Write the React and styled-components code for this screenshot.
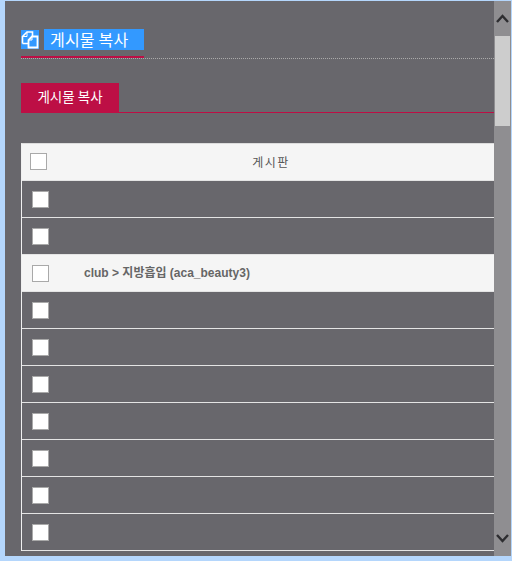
import React from "react";
import styled, { createGlobalStyle } from "styled-components";

const Global = createGlobalStyle`
  html, body { margin: 0; padding: 0; height: 100%; overflow: hidden; }
  body { background: linear-gradient(90deg, #d3e6fb 0, #afd3fb 5px); font-family: "Liberation Sans", "Noto Sans CJK KR", sans-serif; }
`;
const Frame = styled.div`
  box-sizing: border-box; width: 512px; height: 561px; padding: 1px 1px 5px 5px;
  display: flex; background: #b4d6fc;
`;
const Page = styled.main`
  flex: 1; min-width: 0; height: 555px; overflow: hidden; background: #68676c;
  padding: 28px 0 0 16px; box-sizing: border-box;
`;
const TitleBar = styled.div`
  height: 29px; display: flex; align-items: flex-start; border-bottom: 1px dotted #aaa; box-sizing: content-box; position: relative;
`;
const TitleInner = styled.h1`
  margin: 0; width: 123px; height: 29px; display: flex; align-items: flex-start; box-sizing: border-box;
  border-bottom: 2px solid #bd0f45; font-weight: 400; position: relative; z-index: 1; margin-bottom: -1px;
`;
const IconWrap = styled.span`
  display: block; width: 18px; height: 19px; margin-top: 1px; background: #3399ff;
  svg { display: block; margin-top: 0; }
`;
const TitleText = styled.span`
  margin-left: 5px; width: 100px; height: 21px; background: #3399ff; color: #fff;
  font: 400 16px/21px "Noto Sans CJK KR", sans-serif; padding-left: 6px; box-sizing: border-box; white-space: nowrap; letter-spacing: .2px;
`;
const TabBar = styled.div`
  margin-top: 24px; height: 30px; border-bottom: 1px solid #bd0f45; box-sizing: border-box; display: flex;
`;
const Tab = styled.div`
  width: 98px; height: 29px; background: #bd0f45; color: #fff; text-align: center;
  font: 400 13.5px/27px "Noto Sans CJK KR", sans-serif;
`;
const Table = styled.div`
  margin-top: 30px; border-top: 1px solid #dcdcdc; border-left: 1px solid #f0f0f0; width: 473px;
`;
const Row = styled.div`
  height: 37px; box-sizing: border-box; border-bottom: 1px solid #e4e4e4; display: flex; align-items: center;
  background: ${p => (p.$light ? "#f5f5f5" : "transparent")};
`;
const Box = styled.span`
  flex: none; display: block; width: 17px; height: 17px; box-sizing: border-box;
  margin-left: ${p => (p.$head ? "8px" : "10px")};
  margin-top: ${p => (p.$head ? "-1px" : "0")};
  background: #fff; border: 1px solid #a9a9a9;
`;
const HeadLabel = styled.div`
  flex: 1; text-align: center; color: #555; font: 400 12px/16px "Noto Sans CJK KR", sans-serif; letter-spacing: 1.4px; padding-right: 0; margin-left: -26px; padding-left: 26px;
`;
const RowLabel = styled.div`
  margin-left: 35px; color: #666; font: 700 12px/16px "Liberation Sans", "Noto Sans CJK KR", sans-serif; white-space: nowrap;
`;
const Scroll = styled.aside`
  flex: none; width: 17px; height: 555px; background: #8f8e91; display: flex; flex-direction: column; align-items: center; margin-right: 0;
`;
const ScrollBtn = styled.div`
  width: 17px; height: ${p => p.$h}px; flex: none; display: flex; align-items: center; justify-content: center; background: #8f8e91;
`;
const Thumb = styled.div`
  width: 15px; height: 90px; background: #cdcdcd; flex: none;
`;
const Spacer = styled.div` flex: 1; `;

const CopyIcon = () => (
  <svg width="18" height="19" viewBox="0 0 18 19" fill="none" stroke="#fff" strokeWidth="1.6">
    <path d="M1.5 13.5V6.5L6 2h5.5v4M1.5 13.5H7" />
    <path d="M7.5 16.5V10L11 6.5h5.5v11h-9z" strokeWidth="1.8" />
    <path d="M6 2v4.5H1.5M11 6.5V10H7.5" strokeWidth="1" />
  </svg>
);
const Chev = ({ up }) => (
  <svg width="13" height="9" viewBox="0 0 13 9" fill="none" stroke="#2d2d30" strokeWidth="2.4">
    <path d={up ? "M1 8l5.5-6L12 8" : "M1 1l5.5 6L12 1"} />
  </svg>
);

const rows = [0,1,2,3,4,5,6,7,8,9];

export default function App() {
  return (
    <>
      <Global />
      <Frame>
        <Page>
          <TitleBar>
            <TitleInner>
              <IconWrap><CopyIcon /></IconWrap>
              <TitleText>게시물 복사</TitleText>
            </TitleInner>
          </TitleBar>
          <TabBar><Tab>게시물 복사</Tab></TabBar>
          <Table>
            <Row $light><Box $head /><HeadLabel>게시판</HeadLabel></Row>
            {rows.map(i => (
              <Row key={i} $light={i === 2}>
                <Box />
                {i === 2 && <RowLabel>club &gt; 지방흡입 (aca_beauty3)</RowLabel>}
              </Row>
            ))}
          </Table>
        </Page>
        <Scroll>
          <ScrollBtn $h={35}><Chev up /></ScrollBtn>
          <Thumb />
          <Spacer />
          <ScrollBtn $h={35}><Chev /></ScrollBtn>
        </Scroll>
      </Frame>
    </>
  );
}
